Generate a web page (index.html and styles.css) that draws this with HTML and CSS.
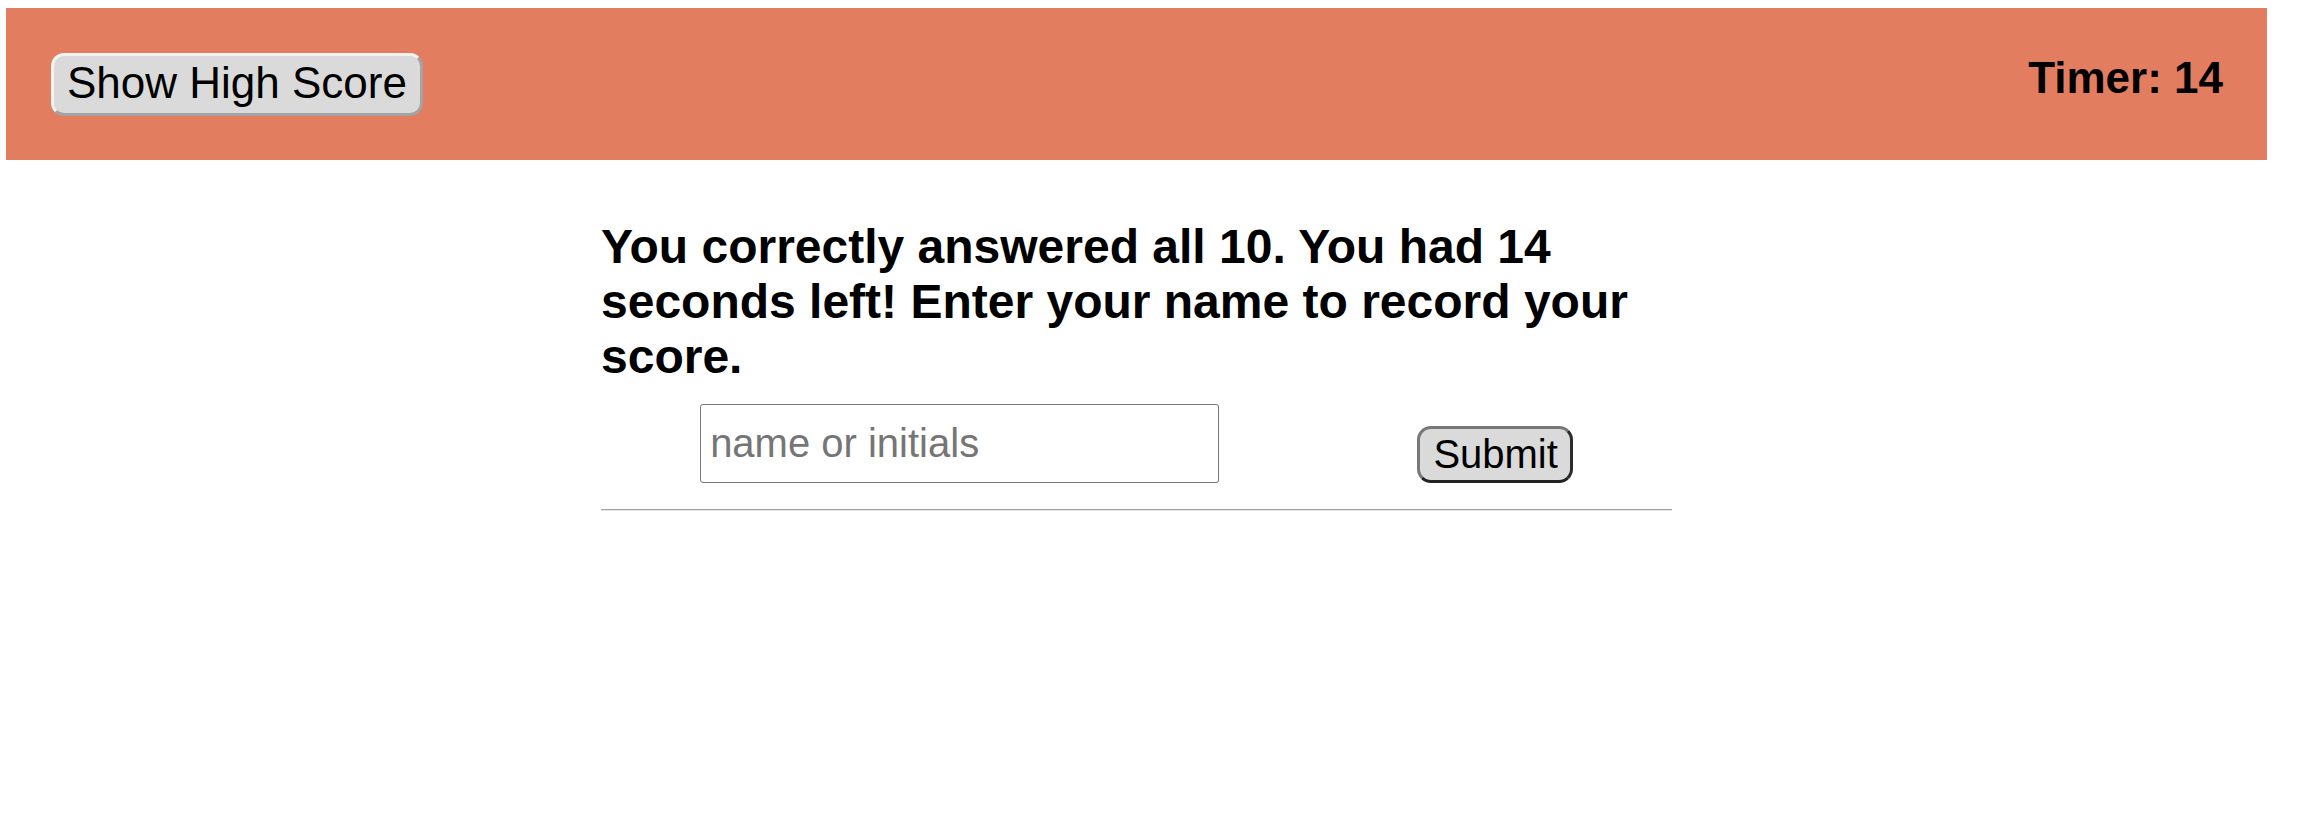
FILE: index.html
```html
<!DOCTYPE html>
<html lang="en">
<head>
<meta charset="utf-8">
<title>Quiz</title>
<link rel="stylesheet" href="styles.css">
</head>
<body>
<header class="topbar">
  <button class="btn-highscore" type="button">Show High Score</button>
  <div class="timer">Timer: 14</div>
</header>
<main class="quiz">
  <h2 class="result">You correctly answered all 10. You had 14 seconds left! Enter your name to record your score.</h2>
  <form class="entry">
    <input class="name-input" type="text" placeholder="name or initials">
    <button class="btn-submit" type="button">Submit</button>
  </form>
  <hr class="divider">
</main>
</body>
</html>
```
FILE: styles.css
```css
html, body {
  background: #ffffff;
}
body {
  margin: 8px 33px 0 6px;
  font-family: "Liberation Sans", Arial, sans-serif;
  color: #000;
}
.topbar {
  box-sizing: border-box;
  height: 152px;
  background: #e27d60;
  display: flex;
  align-items: center;
  justify-content: space-between;
  padding: 0 44px 0 45px;
}
.btn-highscore {
  font-family: "Liberation Sans", Arial, sans-serif;
  font-size: 44px;
  color: #000;
  background: #dadada;
  border: 3px solid;
  border-color: #f2f2f2 #a3a3a3 #a3a3a3 #f2f2f2;
  border-radius: 13px;
  padding: 2px 13px 5px 13px;
  line-height: normal;
}
.timer {
  font-size: 44px;
  font-weight: bold;
  margin-bottom: 12px;
}
.quiz {
  width: 1071px;
  margin: 0 auto;
}
.result {
  font-size: 48px;
  font-weight: bold;
  line-height: normal;
  margin: 59px 0 20px 0;
}
.entry {
  display: flex;
  justify-content: space-around;
  align-items: flex-end;
  margin: 0;
}
.name-input {
  box-sizing: border-box;
  width: 519px;
  height: 79px;
  border: 1px solid #767676;
  border-radius: 3px;
  padding: 0 9px;
  font-family: "Liberation Sans", Arial, sans-serif;
  font-size: 40px;
  color: #000;
  background: #fff;
  margin: 0;
}
.name-input::placeholder {
  color: #757575;
}
.btn-submit {
  font-family: "Liberation Sans", Arial, sans-serif;
  font-size: 40px;
  color: #000;
  background: #dadada;
  border: 3px solid;
  border-color: #777777 #2b2b2b #222222 #777777;
  border-radius: 14px;
  padding: 3px 12px 3px 13px;
  line-height: normal;
  margin: 0;
}
.divider {
  margin: 26px 0 0 0;
  border: 0;
  border-top: 1px solid #9f9f9f;
  border-bottom: 1px solid #e6e6e6;
  height: 0;
}
```
